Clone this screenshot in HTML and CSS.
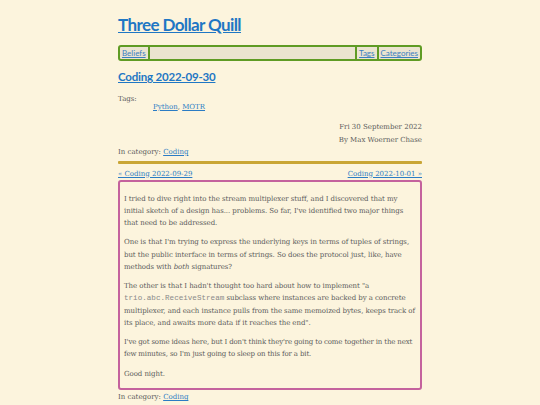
FILE: index.html
```html
<!DOCTYPE html>
<html lang="en">
<head>
<meta charset="utf-8">
<title>Coding 2022-09-30 - Three Dollar Quill</title>
<link rel="stylesheet" href="styles.css">
</head>
<body>
<div class="page">
  <header class="site-header">
    <h1 class="site-title"><a href="#">Three Dollar Quill</a></h1>
    <nav class="menu">
      <a class="menu-item menu-left" href="#">Beliefs</a>
      <span class="menu-spacer"></span>
      <a class="menu-item menu-right" href="#">Tags</a>
      <a class="menu-item menu-right" href="#">Categories</a>
    </nav>
  </header>
  <article class="post">
    <h2 class="post-title"><a href="#">Coding 2022-09-30</a></h2>
    <div class="tags">
      <div class="tags-label">Tags:</div>
      <div class="tags-list"><a href="#">Python</a>, <a href="#">MOTR</a></div>
    </div>
    <div class="meta">
      <div class="meta-line">Fri 30 September 2022</div>
      <div class="meta-line">By Max Woerner Chase</div>
    </div>
    <div class="category">In category: <a href="#">Coding</a></div>
    <div class="rule"></div>
    <div class="pager">
      <a href="#">« Coding 2022-09-29</a>
      <a href="#">Coding 2022-10-01 »</a>
    </div>
    <div class="content">
      <p>I tried to dive right into the stream multiplexer stuff, and I discovered that my initial sketch of a design has... problems. So far, I've identified two major things that need to be addressed.</p>
      <p>One is that I'm trying to express the underlying keys in terms of tuples of strings, but the public interface in terms of strings. So does the protocol just, like, have methods with <em>both</em> signatures?</p>
      <p>The other is that I hadn't thought too hard about how to implement "a <code>trio.abc.ReceiveStream</code> subclass where instances are backed by a concrete multiplexer, and each instance pulls from the same memoized bytes, keeps track of its place, and awaits more data if it reaches the end".</p>
      <p class="p-tight">I've got some ideas here, but I don't think they're going to come together in the next few minutes, so I'm just going to sleep on this for a bit.</p>
      <p>Good night.</p>
    </div>
    <div class="category category-bottom">In category: <a href="#">Coding</a></div>
  </article>
</div>
</body>
</html>
```

FILE: styles.css
```css
html, body {
  margin: 0;
  padding: 0;
  background: #fcf4dd;
}

body {
  font-family: "DejaVu Serif", "Liberation Serif", serif;
  font-size: 7px;
  color: #5b5b5b;
}

a {
  color: #2b7cc4;
  text-decoration: underline;
}

.page {
  width: 304px;
  margin: 0 auto;
  padding-top: 15px;
}

.site-title {
  margin: 0;
  font-family: "Lato", "Open Sans", sans-serif;
  font-weight: 700;
  font-size: 17px;
  line-height: 20px;
  letter-spacing: -0.6px;
}

.site-title a {
  color: #1f77c4;
}

.menu {
  margin-top: 10px;
  display: flex;
  height: 12px;
  border: 2px solid #5f9b24;
  border-radius: 3px;
  background: #ebe4d0;
  font-family: "Lato", "Open Sans", sans-serif;
  font-size: 8px;
  line-height: 12px;
}

.menu-item {
  padding: 0 2px;
  color: #3b7fc0;
}

.menu-left {
  border-right: 2px solid #5f9b24;
}

.menu-right {
  border-left: 2px solid #5f9b24;
}

.menu-spacer {
  flex: 1;
}

.post-title {
  margin: 8px 0 0;
  font-family: "Lato", "Open Sans", sans-serif;
  font-weight: 700;
  font-size: 11.5px;
  line-height: 16px;
  letter-spacing: -0.2px;
}

.post-title a {
  color: #1f77c4;
}

.tags {
  margin-top: 10px;
  line-height: 8px;
}

.tags-list {
  margin-left: 35px;
  margin-top: 0;
}

.meta {
  margin-top: 10px;
  text-align: right;
  line-height: 12.5px;
}

.category {
  line-height: 12px;
}

.rule {
  margin-top: 3px;
  height: 2.5px;
  border-radius: 1px;
  background: #c9a534;
}

.pager {
  margin-top: 4px;
  display: flex;
  justify-content: space-between;
  line-height: 12px;
}

.content {
  border: 2px solid #c4629d;
  border-radius: 3px;
  padding: 4px 4px 1px;
  line-height: 12.2px;
  letter-spacing: -0.06px;
}

.content p {
  margin: 7.2px 0;
}

.content .p-tight {
  letter-spacing: -0.15px;
}

.content code {
  font-family: "Liberation Mono", "DejaVu Sans Mono", monospace;
  font-size: 7.6px;
  line-height: 10px;
  letter-spacing: 0;
  color: #8a8a8a;
}

.category-bottom {
  margin-top: 1px;
}
```
